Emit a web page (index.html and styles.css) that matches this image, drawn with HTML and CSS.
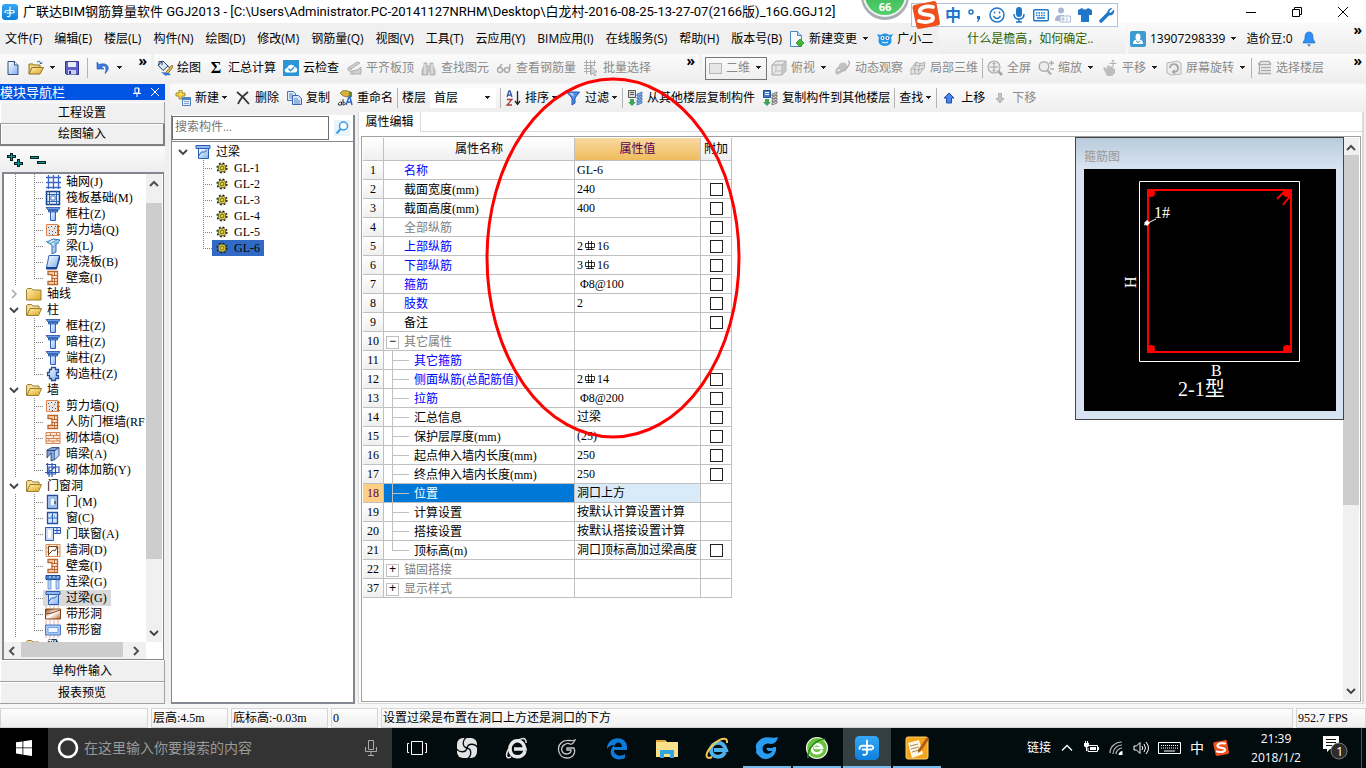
FILE: index.html
```html
<!DOCTYPE html>
<html lang="zh-CN">
<head>
<meta charset="utf-8">
<title>广联达BIM钢筋算量软件 GGJ2013</title>
<link rel="stylesheet" href="styles.css">
</head>
<body>
<svg class="sprite" aria-hidden="true">
  <defs>
    <linearGradient id="gBlue" x1="0" y1="0" x2="1" y2="1"><stop offset="0" stop-color="#fff"/><stop offset="1" stop-color="#7fb0f0"/></linearGradient>
    <linearGradient id="gGold" x1="0" y1="0" x2="1" y2="1"><stop offset="0" stop-color="#fff3b8"/><stop offset="1" stop-color="#e0a21c"/></linearGradient>
    <linearGradient id="gGreen" x1="0" y1="0" x2="0" y2="1"><stop offset="0" stop-color="#2fae4c"/><stop offset="1" stop-color="#53cf6c"/></linearGradient>
    <linearGradient id="gApp" x1="0" y1="0" x2="0" y2="1"><stop offset="0" stop-color="#35a8f5"/><stop offset="1" stop-color="#0d7fdd"/></linearGradient>
    <linearGradient id="gBrown" x1="0" y1="0" x2="1" y2="1"><stop offset="0" stop-color="#8a4310"/><stop offset=".5" stop-color="#fff"/><stop offset="1" stop-color="#b4652c"/></linearGradient>
  </defs>
  <symbol id="app" viewBox="0 0 16 16"><rect width="16" height="16" rx="3" fill="url(#gApp)"/><path d="M8 3v8q0 2-2.500 1.500M3 8.500q0-2 2-2h6q2.500 1 0 2.500H5" fill="none" stroke="#fff" stroke-width="1.200" stroke-linecap="round"/></symbol>
  <symbol id="new" viewBox="0 0 16 16"><path d="M3 1.500h6.500l3.500 3.500v9.500H3z" fill="url(#gBlue)" stroke="#35527c"/><path d="M9.500 1.500V5H13" fill="#fff" stroke="#35527c"/></symbol>
  <symbol id="open" viewBox="0 0 16 16"><path d="M1 14V4h4l1 1h6v3" fill="#f3d276" stroke="#8f7327"/><path d="M1 14l3-6.500h11.500L12 14z" fill="url(#gGold)" stroke="#8f7327"/><path d="M9 2c2-1.500 4-.5 4 1.500M11.500 2.500l1.500 1.500 1.500-1.500" fill="none" stroke="#3b5f97"/></symbol>
  <symbol id="save" viewBox="0 0 16 16"><path d="M1.500 1.500h13v13h-12l-1-1z" fill="#5f62c8" stroke="#30348c"/><path d="M4 2h8v5H4z" fill="#e9ecfa"/><path d="M4 10h8v4.500H4z" fill="#c9cdf0"/><path d="M5 11h2v3H5z" fill="#30348c"/></symbol>
  <symbol id="undo" viewBox="0 0 16 16"><path d="M2 2v7h7L6.500 7c3-2.500 6 0 3.500 6.500C16 9 13.500 1.500 4 4.500z" fill="#3d7be0" stroke="#2254ac" stroke-width=".6"/></symbol>
  <symbol id="draw" viewBox="0 0 16 16"><path d="M1 5l5-4 5 5-5 4.500z" fill="#dbe6f5" stroke="#29456e"/><path d="M2 5V1.500h3V5" fill="none" stroke="#29456e"/><path d="M11 6c2 1 2 3 1 4" stroke="#29456e" fill="none"/><path d="M15 5l-6 7-1 3 3-1.500L16 7z" fill="#e9b93b" stroke="#75540d" stroke-width=".7"/><path d="M4 12l4 3.500 6-.5-2-2z" fill="#3474d0"/></symbol>
  <symbol id="cloud" viewBox="0 0 16 16"><rect width="16" height="16" fill="#2b95d6"/><path d="M4 12.500c-3.500-.5-2.500-4.500.3-4.500C5 4 10.500 3.500 11.500 7c4 .5 3.500 5.500 0 5.500z" fill="#fff"/><path d="M5.500 8.800l2 2 3.500-3.500" fill="none" stroke="#2b95d6" stroke-width="1.500"/></symbol>
  <symbol id="slab" viewBox="0 0 16 16"><path d="M2 8l9-6 3 1-9 6zM5 9v6M2 8v2l3 2M6 14h9V7l-4 3-5 1z" fill="#cfcfcf" stroke="#b0b0b0"/></symbol>
  <symbol id="find" viewBox="0 0 16 16"><path d="M3 3h3v3h3V3h3v3l2 4v5H9v-4H7v4H1v-5l2-4z" fill="#c4c4c4" stroke="#a6a6a6" stroke-width=".7"/><path d="M4 4v10M11 4v10" stroke="#eee"/></symbol>
  <symbol id="glasses" viewBox="0 0 16 16"><g fill="none" stroke="#ababab" stroke-width="1.400"><circle cx="4" cy="10" r="2.500"/><circle cx="11" cy="10" r="2.500"/><path d="M2 9l4-5M13.500 10l.5-6M6.500 10h2"/></g></symbol>
  <symbol id="batch" viewBox="0 0 16 16"><path d="M1 2.500h12M1 5.500h10M1 8.500h7M1 11.500h7M3.500 0v14M7.500 0v14M11.500 0v6" stroke="#ababab"/><path d="M8 6l6 6H11l2 3.500-1.500.5L10 13l-2 2z" fill="#d6d6d6" stroke="#a0a0a0" stroke-width=".7"/></symbol>
  <symbol id="cube" viewBox="0 0 16 16"><path d="M1 5l4-4h10v10l-4 4H1z" fill="#e8e8e8" stroke="#a8a8a8"/><path d="M1 5h10v10M11 5l4-4" fill="none" stroke="#a8a8a8"/><path d="M11 5l4-4v10l-4 4z" fill="#c6c6c6"/><path d="M5 5v6l-4 4M5 11h6" fill="none" stroke="#bbb"/></symbol>
  <symbol id="orbit" viewBox="0 0 16 16"><circle cx="8" cy="7" r="4.500" fill="#c2c2c2"/><path d="M13 1c3 1 1 6-4 9s-8 4-8 2 2-4 4-5" fill="none" stroke="#b3b3b3" stroke-width="1.500"/><path d="M1 15l2-5 3 3z" fill="#bbb"/></symbol>
  <symbol id="local3d" viewBox="0 0 16 16"><path d="M1 9l5-7 4 1.500 5-1-1 6-5 6-4-1-4 1z" fill="#e6e6e6" stroke="#b0b0b0"/><path d="M6 3l-1.500 6L5 14M10 4L8.500 9l.5 5M1.500 9l3 0 4 1 5-2M4 5l4 1 6-1" fill="none" stroke="#b0b0b0"/></symbol>
  <symbol id="full" viewBox="0 0 16 16"><circle cx="7" cy="7" r="6" fill="#eee" stroke="#ababab" stroke-width="1.200"/><path d="M11.500 11.500L15 15" stroke="#a5a5a5" stroke-width="2.500"/><path d="M7 2.500v9M2.500 7h9M5.500 4L7 2.500 8.500 4M5.500 10L7 11.500 8.500 10" fill="none" stroke="#a0a0a0"/></symbol>
  <symbol id="zoom" viewBox="0 0 16 16"><circle cx="6" cy="6.500" r="4.800" fill="#eee" stroke="#b0b0b0" stroke-width="1.500"/><path d="M9.500 10.500L13 14.500" stroke="#b0b0b0" stroke-width="2.500"/><path d="M11 3h5M13.500 .5v5M12 9h4" stroke="#b0b0b0" stroke-width="1.300"/></symbol>
  <symbol id="pan" viewBox="0 0 16 16"><path d="M1 8l2-1 2 2V6l2-1 1 2 2-1 1 2 2 1v4l-3 3H5z" fill="#bdbdbd"/><path d="M11 0v7M7.500 3.500h7M9.500 1.500L11 0l1.500 1.500" fill="none" stroke="#b0b0b0"/></symbol>
  <symbol id="rotate" viewBox="0 0 16 16"><path d="M1 3l10-2 4 2v11L5 15l-4-2z" fill="#ededed" stroke="#b5b5b5"/><path d="M4 8a4 4 0 1 1 5 4" fill="none" stroke="#a5a5a5" stroke-width="1.800"/><path d="M9 9v5.500l-3.500-2.500z" fill="#a5a5a5"/></symbol>
  <symbol id="floors" viewBox="0 0 16 16"><path d="M2 4.500l3-3h8l2 3M2 4.500h13M5 7.500h10M5 10.500h10M2 13.500h13M3.500 5v9" fill="none" stroke="#ababab" stroke-width="1.400"/></symbol>
  <symbol id="create" viewBox="0 0 16 16"><path d="M4 0h3v3h3v3H7v3H4V6H1V3h3z" fill="#f6d94c" stroke="#8d7410" stroke-width=".8"/><path d="M7.500 7.500h8v8h-8z" fill="#eaf2fd" stroke="#5080bd"/><path d="M8 8h7v2H8z" fill="#4a83cf"/><path d="M9 11.500h5M9 13.500h5" stroke="#7fa6da"/></symbol>
  <symbol id="del" viewBox="0 0 16 16"><path d="M2 2c4 3 8 7 12 12M13 2C9 5 5 9 3 14" fill="none" stroke="#383838" stroke-width="1.800"/></symbol>
  <symbol id="copy" viewBox="0 0 16 16"><path d="M1.500 1.500h6l2 2v7h-8z" fill="#e2edfb" stroke="#4b78b7"/><path d="M6.500 5.500h6l3 3v6h-9z" fill="#d1e3fa" stroke="#3768ae"/><path d="M8 9h4M8 11h6M8 13h6M3 4h4M3 6h3M3 8h3" stroke="#5c8acb"/></symbol>
  <symbol id="rename" viewBox="0 0 16 16"><path d="M3 3l4-3 7 2-3 5-5-1z" fill="#d8b13c" stroke="#75621f" stroke-width=".7"/><path d="M12 2h3v5h-3z" fill="#5b8a3a"/><path d="M1.500 15c-1-3 3-3 3-3v3zM6 9v6c3 0 3-3 0-3" fill="none" stroke="#333"/><path d="M9 15l3-8h1l2 8M10.500 12h4" fill="none" stroke="#2f68c8" stroke-width="1.500"/></symbol>
  <symbol id="sort" viewBox="0 0 16 16"><path d="M2 7l2-6h1l2 6M3 5h3" fill="none" stroke="#35579f" stroke-width="1.300"/><path d="M2 9.500h5L2 15h5" fill="none" stroke="#a63e3e" stroke-width="1.300"/><path d="M12.500 1v13M10 11l2.500 3.500L15 11" fill="none" stroke="#222" stroke-width="1.300"/></symbol>
  <symbol id="filter" viewBox="0 0 16 16"><path d="M1.500 2h13L10 8v5l-3 2V8z" fill="#4f8ae8" stroke="#2558b4"/><path d="M4 3h4l1 4z" fill="#b7d1fb"/></symbol>
  <symbol id="fromfloor" viewBox="0 0 16 16"><path d="M1.500 .5h7v7h-7z" fill="#ddd" stroke="#555"/><path d="M3 2.500h4M3 4.500h4" stroke="#555"/><path d="M3 9h4v3h2l-4 4-4-4h2z" fill="#3ba55b"/><path d="M10 4l5-2v2l-5 2zM10 7l5-2v2l-5 2zM10 10l5-2v2l-5 2zM10 13l5-2v2l-5 2z" fill="#8fb8ee" stroke="#2660ad" stroke-width=".7"/></symbol>
  <symbol id="tofloor" viewBox="0 0 16 16"><path d="M1.500 .5h7v7h-7z" fill="#3f76cf" stroke="#27509b"/><path d="M3 2.500h4M3 4.500h4" stroke="#fff"/><path d="M3 9h4v3h2l-4 4-4-4h2z" fill="#3ba55b"/><path d="M10 4l5-2v2l-5 2zM10 7l5-2v2l-5 2zM10 10l5-2v2l-5 2zM10 13l5-2v2l-5 2z" fill="#ddd" stroke="#555" stroke-width=".7"/></symbol>
  <symbol id="up" viewBox="0 0 16 16"><path d="M8 3l5 5h-2.500v5h-5V8H3z" fill="#4a84ea" stroke="#1d4fae"/></symbol>
  <symbol id="down" viewBox="0 0 16 16"><path d="M8 13L4 8.500h2.500v-5h3v5H12z" fill="#c6c6c6" stroke="#b0b0b0"/></symbol>
  <symbol id="change" viewBox="0 0 16 16"><path d="M1.500 .5h7l4 4v11h-11z" fill="#f4faff" stroke="#4b86bd"/><path d="M8.500 .5v4h4" fill="#b8d9f4" stroke="#4b86bd"/><path d="M11 8l4 4-4 4-4-4z" fill="#41b53c" stroke="#1d7f1b" stroke-width=".7"/></symbol>
  <symbol id="owl" viewBox="0 0 16 16"><path d="M0 3l4 1c2-2 6-2 8 0l4-1-2 4c2 5-2 8-6 8s-8-3-6-8z" fill="#2496e8"/><circle cx="5.500" cy="7" r="2" fill="#fff"/><circle cx="10.500" cy="7" r="2" fill="#fff"/><circle cx="5.500" cy="7" r=".8"/><circle cx="10.500" cy="7" r=".8"/><path d="M5 11q3 2 6 0" stroke="#fff" fill="none"/></symbol>
  <symbol id="user" viewBox="0 0 16 16"><rect width="16" height="16" rx="2" fill="#3c9bd0"/><path d="M8 2.500c3 0 3 5 1.500 6 3 .5 3.500 2 3.500 4.500H3c0-2.500.5-4 3.500-4.500C5 7.500 5 2.500 8 2.500" fill="#fff"/><path d="M6 10l2 1.500L10 10" stroke="#3c9bd0" fill="none"/></symbol>
  <symbol id="bell" viewBox="0 0 16 16"><path d="M8 1c3.500 0 4 3 4 6 0 2 2 3.500 2 5H2c0-1.500 2-3 2-5 0-3 .5-6 4-6z" fill="#2e8ff5" stroke="#1b62bb" stroke-width=".6"/><path d="M6 13.500h4L8 15.500z" fill="#2b6db8"/></symbol>
  <symbol id="search" viewBox="0 0 16 16"><rect x="0" y="0" width="16" height="16" fill="#e8f3fc"/><circle cx="9.500" cy="6" r="4" fill="#fff" stroke="#3a9be6" stroke-width="1.500"/><path d="M6.500 9L2.500 13.500" stroke="#3a9be6" stroke-width="2"/></symbol>
  <symbol id="plus2" viewBox="0 0 16 16"><path d="M4.500 1v8M0 4.500h9M11.500 7v8M7 11.500h9" stroke="#022" stroke-width="3"/><path d="M4.500 2v6M1 4.500h7M11.500 8v6M8 11.500h7" stroke="#0c9999"/></symbol>
  <symbol id="minus2" viewBox="0 0 16 16"><path d="M0 5.500h9M7 10.500h9" stroke="#022" stroke-width="3"/><path d="M1 5.500h7M8 10.500h7" stroke="#0c9999"/></symbol>
  <symbol id="chevD" viewBox="0 0 10 10"><path d="M1 3l4 4 4-4" fill="none" stroke="#404040" stroke-width="1.800"/></symbol>
  <symbol id="chevU" viewBox="0 0 10 10"><path d="M1 7l4-4 4 4" fill="none" stroke="#505050" stroke-width="2"/></symbol>
  <symbol id="chevL" viewBox="0 0 10 10"><path d="M7 1L3 5l4 4" fill="none" stroke="#505050" stroke-width="2"/></symbol>
  <symbol id="chevR" viewBox="0 0 10 10"><path d="M3 1l4 4-4 4" fill="none" stroke="#505050" stroke-width="2"/></symbol>
  <symbol id="chevG" viewBox="0 0 10 10"><path d="M3 1l4 4-4 4" fill="none" stroke="#a6a6a6" stroke-width="1.500"/></symbol>
  <symbol id="folder" viewBox="0 0 16 16"><path d="M.5 3.500l1-1h4l1.500 1.500h8v10H.5z" fill="url(#gGold)" stroke="#9c7e31"/></symbol>
  <symbol id="folderO" viewBox="0 0 16 16"><path d="M.5 13.500v-10l1-1h4l1.500 1.500h6v3" fill="#f4dd94" stroke="#9c7e31"/><path d="M1 13.500L4 6.500h11.500l-3 7z" fill="url(#gGold)" stroke="#9c7e31"/></symbol>
  <symbol id="grid" viewBox="0 0 16 16"><path d="M3.500 1v14M8.500 1v14M13.500 1v14M1 3.500h15M1 8.500h15M1 13.500h15" stroke="#3b68c4" stroke-width="1.300"/></symbol>
  <symbol id="raft" viewBox="0 0 16 16"><path d="M1.500 1.500h13v13h-13z" fill="#e4effc" stroke="#173e85" stroke-width="1.500"/><path d="M4.500 1v14M11.500 1v14M1 4.500h14M1 11.500h14M7 4v8M9 4v8M4 7h8M4 9h8" stroke="#2d63b7"/><path d="M6.500 6.500h3v3h-3z" fill="#fff"/></symbol>
  <symbol id="column" viewBox="0 0 16 16"><path d="M5.500 5.500h5v9h-5z" fill="url(#gBlue)" stroke="#2b5fc0"/><path d="M1 1.500h14l-1.500 2.500H3zM3.500 4h9v2h-9z" fill="#6b9ceb" stroke="#224f9f" stroke-width=".8"/></symbol>
  <symbol id="swall" viewBox="0 0 16 16"><path d="M1.500 2.500h11v11h-11z" fill="#e8e6e4" stroke="#d98353"/><path d="M3 5.500h1M6 4.500h1M9 6.500h1M4 8.500h1M7 9.500h1M10 10.500h1M4 11.500h1M7 12.500h1M10 4.500h1" stroke="#555"/><path d="M12 4.500h3M12 8.500h3M12 12.500h3M13.500 3v11" stroke="#c85a1b"/></symbol>
  <symbol id="beam" viewBox="0 0 16 16"><path d="M2 4l6-3 7 1-4 4v8l-4 2V7z" fill="url(#gBlue)" stroke="#2f6fae"/><path d="M1 3l5 3M4 6l8-4M9 5h5M8 10l6-7" stroke="#4a9bd0"/></symbol>
  <symbol id="castslab" viewBox="0 0 16 16"><path d="M4 1.500h10.500l-3 12H1.500z" fill="url(#gBlue)" stroke="#2b5fc0"/><path d="M1.500 13.500h10v1.500h-10zM14.500 2v3l-3 10" fill="#1e448e" stroke="#1e448e"/></symbol>
  <symbol id="niche" viewBox="0 0 16 16"><path d="M3 1.500h9.500v13H3v-3h4v-7H3z" fill="#ffe8d6" stroke="#bd6429" stroke-width="1.300"/><path d="M7 5.500h5M7 8.500h5M7 11.500h5M9.500 2v3M9.500 9v5" stroke="#bd6429"/></symbol>
  <symbol id="cross" viewBox="0 0 16 16"><path d="M4.500 3.500h2v-2h4v2h3v3h-2v3h2v3h-3v2h-4v-2h-2v-3h-2v-3h2z" fill="url(#gBlue)" stroke="#244e9c" stroke-width="1.300"/></symbol>
  <symbol id="brick" viewBox="0 0 16 16"><path d="M1 2.500h14v11H1z" fill="#ffe9d8" stroke="#d18554"/><path d="M1 5.500h14M1 8.500h14M1 11h14M5.500 3v3M11.500 3v3M8.500 6v3M4 9v2M12 9v2M8 11v3" stroke="#d18554"/></symbol>
  <symbol id="dbeam" viewBox="0 0 16 16"><path d="M2 4l5-2.500h7l-4 3v9l-4 1.500V7L2 12z" fill="#80a4db" stroke="#1c3868" stroke-width=".8"/><path d="M2 4.500h8M10 4.500l4-3v8l-4 4" fill="#c3d7f3" stroke="#1c3868" stroke-width=".8"/></symbol>
  <symbol id="rebar" viewBox="0 0 16 16"><path d="M2.500 1v11h8V2.500H1M0 10.500h14V5H4V15M7 1v14M4 10l7-6" fill="none" stroke="#2757b7" stroke-width="1.200"/></symbol>
  <symbol id="door" viewBox="0 0 16 16"><path d="M2.500 1.500h10v13h-10z" fill="#bad4f8" stroke="#234f9c" stroke-width="1.300"/><path d="M5 4h5v8H5z" fill="#eff6ff" stroke="#709ddd"/><path d="M10 7v3" stroke="#222"/></symbol>
  <symbol id="window" viewBox="0 0 16 16"><path d="M2.500 2.500h10v11h-10z" fill="#d4e6fd" stroke="#234f9c" stroke-width="1.300"/><path d="M7.500 2v12M2 8h11M6 6h1M9 6h1" stroke="#2e68c0"/></symbol>
  <symbol id="dwin" viewBox="0 0 16 16"><path d="M.5 1.500h8v13h-8z" fill="#c7dcfa" stroke="#2c5cb0"/><path d="M3 4h3v8H3z" fill="#fff"/><path d="M8.500 1.500h7v6h-7zM12 1v7M9 4.500h7" fill="#d9e8fc" stroke="#2c5cb0"/></symbol>
  <symbol id="whole" viewBox="0 0 16 16"><path d="M1 2.500h14v12H1zM1 6h14M1 10h14M4 2v12M12 2v12" fill="#fff0e3" stroke="#d98b58"/><path d="M3.500 13.500v-9h9v9" fill="#fff" stroke="#70401c"/><path d="M4 12l4-4 2 1 2-4" stroke="#70401c" fill="none"/></symbol>
  <symbol id="lbeam" viewBox="0 0 16 16"><path d="M1 1.500h14v4H1z" fill="#467ecb" stroke="#1b4991"/><path d="M4 3h2M8 3h2M12 3h2" stroke="#dce9fb"/><path d="M3 6h3v9H3zM11 6h3v9h-3z" fill="#bcd6f8" stroke="#477fc8" stroke-width=".7"/></symbol>
  <symbol id="lintel" viewBox="0 0 16 16"><path d="M3.500 4.500h10v10h-10z" fill="url(#gBlue)" stroke="#2c5cb0"/><path d="M1 1.500h14v3H1z" fill="#8fb8f2" stroke="#2c5cb0"/><path d="M3.500 12l3-4h3l2.500-2" fill="none" stroke="#2c5cb0"/></symbol>
  <symbol id="striphole" viewBox="0 0 16 16"><path d="M1 0v2M5 0v2M9 0v2M13 0v2M1 14v2M5 14v2M9 14v2M13 14v2" stroke="#eeaaa0"/><path d="M.5 3h15v10H.5z" fill="url(#gBrown)" stroke="#86430f"/><path d="M1 8l6-1 8-3" stroke="#86430f" fill="none"/></symbol>
  <symbol id="stripwin" viewBox="0 0 16 16"><path d="M1 0v3M5 0v3M9 0v3M13 0v3M1 13v3M5 13v3M9 13v3M13 13v3" stroke="#eeaaa0"/><path d="M.5 3h15v10H.5z" fill="#a9c9f7" stroke="#4875c6"/><path d="M3 5.500h10v5H3z" fill="#eff6ff" stroke="#7aa4e2"/></symbol>
  <symbol id="gear" viewBox="0 0 12 12"><circle cx="6" cy="6" r="4.800" fill="none" stroke="#222" stroke-width="1.600" stroke-dasharray="1.900 1.870"/><circle cx="6" cy="6" r="3.900" fill="#f2e63b" stroke="#333" stroke-width=".7"/><path d="M6 2.500v7M2.500 6h7M4 4l4 4M8 4L4 8" stroke="#4b4600" stroke-width=".6"/><circle cx="6" cy="6" r="1.500" fill="#fff04a" stroke="#333" stroke-width=".5"/></symbol>
  <symbol id="sogou" viewBox="0 0 28 28"><path d="M2 4L22 0q2 0 2.500 2L28 22q0 2-2 2.500L7 28q-2 0-2.500-2L.5 7Q.5 4.500 2 4z" fill="#f0501e"/><path d="M21 6C14 4 7 7 8 11c1 4 13 1 13 6 0 4-8 5-14 3" fill="none" stroke="#fff" stroke-width="3.800" stroke-linecap="round"/></symbol>
  <symbol id="hrb" viewBox="0 0 12 12"><path d="M4.500 1v9M7.500 1v9M1.500 3.500h9v4h-9zM2 9.500h8" fill="none" stroke="#000" stroke-width=".8"/></symbol>
</svg>

<div class="app">
  <header class="titlebar">
    <svg class="i16"><use href="#app"/></svg>
    <h1>广联达BIM钢筋算量软件 GGJ2013 - [C:\Users\Administrator.PC-20141127NRHM\Desktop\白龙村-2016-08-25-13-27-07(2166版)_16G.GGJ12]</h1>
    <div class="winbtns">
      <button aria-label="最小化"><svg viewBox="0 0 12 12"><path d="M1 6.500h10" stroke="#000"/></svg></button>
      <button aria-label="还原"><svg viewBox="0 0 12 12"><path d="M1.500 3.500h7v7h-7zM3.500 3V1.500h7v7H9" fill="none" stroke="#000"/></svg></button>
      <button aria-label="关闭"><svg viewBox="0 0 12 12"><path d="M1 1l10 10M11 1L1 11" stroke="#000"/></svg></button>
    </div>
  </header>

  <nav class="menubar">
    <div class="menus">
      <button>文件(F)</button><button>编辑(E)</button><button>楼层(L)</button><button>构件(N)</button><button>绘图(D)</button><button>修改(M)</button><button>钢筋量(Q)</button><button>视图(V)</button><button>工具(T)</button><button>云应用(Y)</button><button>BIM应用(I)</button><button>在线服务(S)</button><button>帮助(H)</button><button>版本号(B)</button>
      <button class="tool"><svg class="i16"><use href="#change"/></svg>新建变更<i class="arrow"></i></button>
      <button class="tool"><svg class="i16"><use href="#owl"/></svg>广小二</button>
    </div>
    <a class="tip" href="#">什么是檐高，如何确定..</a>
    <div class="account">
      <button class="tool"><svg class="i16"><use href="#user"/></svg>13907298339<i class="arrow"></i></button>
      <span>造价豆:0</span>
      <button aria-label="通知"><svg class="i16"><use href="#bell"/></svg></button>
      <button class="more" aria-label="更多">»</button>
    </div>
  </nav>

  <div class="toolbars">
    <div class="toolbar files">
      <button aria-label="新建"><svg class="i16"><use href="#new"/></svg></button>
      <button class="tool" aria-label="打开"><svg class="i16"><use href="#open"/></svg><i class="arrow"></i></button>
      <button aria-label="保存"><svg class="i16"><use href="#save"/></svg></button>
      <i class="sep"></i>
      <button class="tool" aria-label="撤销"><svg class="i16"><use href="#undo"/></svg><i class="arrow"></i></button>
      <button class="more" aria-label="更多">»</button>
    </div>
    <div class="toolbar drawing">
      <button class="tool"><svg class="i16"><use href="#draw"/></svg>绘图</button>
      <button class="tool"><b class="i16 sigma">Σ</b>汇总计算</button>
      <button class="tool"><svg class="i16"><use href="#cloud"/></svg>云检查</button>
      <button class="tool off"><svg class="i16"><use href="#slab"/></svg>平齐板顶</button>
      <button class="tool off"><svg class="i16"><use href="#find"/></svg>查找图元</button>
      <button class="tool off"><svg class="i16"><use href="#glasses"/></svg>查看钢筋量</button>
      <button class="tool off"><svg class="i16"><use href="#batch"/></svg>批量选择</button>
      <button class="more" aria-label="更多">»</button>
    </div>
    <div class="toolbar views">
      <button class="tool off dim"><i class="swatch"></i>二维<i class="arrow"></i></button>
      <button class="tool off"><svg class="i16"><use href="#cube"/></svg>俯视<i class="arrow"></i></button>
      <button class="tool off"><svg class="i16"><use href="#orbit"/></svg>动态观察</button>
      <button class="tool off"><svg class="i16"><use href="#local3d"/></svg>局部三维</button>
      <i class="sep"></i>
      <button class="tool off"><svg class="i16"><use href="#full"/></svg>全屏</button>
      <button class="tool off"><svg class="i16"><use href="#zoom"/></svg>缩放<i class="arrow"></i></button>
      <button class="tool off"><svg class="i16"><use href="#pan"/></svg>平移<i class="arrow"></i></button>
      <button class="tool off"><svg class="i16"><use href="#rotate"/></svg>屏幕旋转<i class="arrow"></i></button>
      <i class="sep"></i>
      <button class="tool off"><svg class="i16"><use href="#floors"/></svg>选择楼层</button>
      <button class="more" aria-label="更多">»</button>
    </div>
  </div>

  <div class="body">
    <aside class="nav">
      <div class="navhead"><h2>模块导航栏</h2>
        <button aria-label="固定"><svg viewBox="0 0 10 10"><path d="M3 1h4v5H3zM1 6.500h8M5 7v3M6.500 1v5" fill="none" stroke="#fff"/></svg></button>
        <button aria-label="关闭"><svg viewBox="0 0 10 10"><path d="M1 1l8 8M9 1L1 9" stroke="#fff"/></svg></button>
      </div>
      <button class="bigbtn">工程设置</button>
      <button class="bigbtn raised">绘图输入</button>
      <div class="navtools"><button aria-label="全部展开"><svg class="i16"><use href="#plus2"/></svg></button><button aria-label="全部折叠"><svg class="i16"><use href="#minus2"/></svg></button></div>
      <div class="treebox">
        <div class="treeview">
          <ul class="tree">
            <li><ul class="leaves">
              <li><button><svg class="i16"><use href="#grid"/></svg>轴网(J)</button></li>
              <li><button><svg class="i16"><use href="#raft"/></svg>筏板基础(M)</button></li>
              <li><button><svg class="i16"><use href="#column"/></svg>框柱(Z)</button></li>
              <li><button><svg class="i16"><use href="#swall"/></svg>剪力墙(Q)</button></li>
              <li><button><svg class="i16"><use href="#beam"/></svg>梁(L)</button></li>
              <li><button><svg class="i16"><use href="#castslab"/></svg>现浇板(B)</button></li>
              <li><button><svg class="i16"><use href="#niche"/></svg>壁龛(I)</button></li>
            </ul></li>
            <li><button class="group"><svg class="chev"><use href="#chevG"/></svg><svg class="i16"><use href="#folder"/></svg>轴线</button></li>
            <li><button class="group"><svg class="chev"><use href="#chevD"/></svg><svg class="i16"><use href="#folderO"/></svg>柱</button>
            <ul class="leaves">
              <li><button><svg class="i16"><use href="#column"/></svg>框柱(Z)</button></li>
              <li><button><svg class="i16"><use href="#column"/></svg>暗柱(Z)</button></li>
              <li><button><svg class="i16"><use href="#column"/></svg>端柱(Z)</button></li>
              <li><button><svg class="i16"><use href="#cross"/></svg>构造柱(Z)</button></li>
            </ul></li>
            <li><button class="group"><svg class="chev"><use href="#chevD"/></svg><svg class="i16"><use href="#folderO"/></svg>墙</button>
            <ul class="leaves">
              <li><button><svg class="i16"><use href="#swall"/></svg>剪力墙(Q)</button></li>
              <li><button><svg class="i16"><use href="#niche"/></svg>人防门框墙(RF</button></li>
              <li><button><svg class="i16"><use href="#brick"/></svg>砌体墙(Q)</button></li>
              <li><button><svg class="i16"><use href="#dbeam"/></svg>暗梁(A)</button></li>
              <li><button><svg class="i16"><use href="#rebar"/></svg>砌体加筋(Y)</button></li>
            </ul></li>
            <li><button class="group"><svg class="chev"><use href="#chevD"/></svg><svg class="i16"><use href="#folderO"/></svg>门窗洞</button>
            <ul class="leaves">
              <li><button><svg class="i16"><use href="#door"/></svg>门(M)</button></li>
              <li><button><svg class="i16"><use href="#window"/></svg>窗(C)</button></li>
              <li><button><svg class="i16"><use href="#dwin"/></svg>门联窗(A)</button></li>
              <li><button><svg class="i16"><use href="#whole"/></svg>墙洞(D)</button></li>
              <li><button><svg class="i16"><use href="#niche"/></svg>壁龛(I)</button></li>
              <li><button><svg class="i16"><use href="#lbeam"/></svg>连梁(G)</button></li>
              <li><button class="current"><svg class="i16"><use href="#lintel"/></svg>过梁(G)</button></li>
              <li><button><svg class="i16"><use href="#striphole"/></svg>带形洞</button></li>
              <li><button><svg class="i16"><use href="#stripwin"/></svg>带形窗</button></li>
            </ul></li>
            <li><button class="group"><svg class="chev"><use href="#chevD"/></svg><svg class="i16"><use href="#folderO"/></svg>梁</button></li>
          </ul>
        </div>
        <div class="vscroll"><svg><use href="#chevU"/></svg><div class="track navtrack"><i></i></div><svg><use href="#chevD"/></svg></div>
        <div class="hscroll"><svg><use href="#chevL"/></svg><div class="track"><i></i></div><svg><use href="#chevR"/></svg></div>
      </div>
      <button class="bigbtn">单构件输入</button>
      <button class="bigbtn">报表预览</button>
    </aside>

    <div class="work">
      <div class="toolbar edit">
        <button class="tool"><svg class="i16"><use href="#create"/></svg>新建<i class="arrow"></i></button>
        <button class="tool"><svg class="i16"><use href="#del"/></svg>删除</button>
        <button class="tool"><svg class="i16"><use href="#copy"/></svg>复制</button>
        <button class="tool"><svg class="i16"><use href="#rename"/></svg>重命名</button>
        <i class="sep"></i>
        <label for="floor">楼层</label>
        <span class="pick"><select id="floor"><option>首层</option></select><i class="arrow"></i></span>
        <i class="sep"></i>
        <button class="tool"><svg class="i16"><use href="#sort"/></svg>排序<i class="arrow"></i></button>
        <button class="tool"><svg class="i16"><use href="#filter"/></svg>过滤<i class="arrow"></i></button>
        <i class="sep"></i>
        <button class="tool"><svg class="i16"><use href="#fromfloor"/></svg>从其他楼层复制构件</button>
        <button class="tool"><svg class="i16"><use href="#tofloor"/></svg>复制构件到其他楼层</button>
        <i class="sep"></i>
        <button class="tool">查找<i class="arrow"></i></button>
        <i class="sep"></i>
        <button class="tool"><svg class="i16"><use href="#up"/></svg>上移</button>
        <button class="tool off"><svg class="i16"><use href="#down"/></svg>下移</button>
      </div>
      <div class="panes">
        <section class="parts">
          <div class="searchrow"><input type="text" placeholder="搜索构件..." aria-label="搜索构件"><button aria-label="搜索"><svg class="i16"><use href="#search"/></svg></button></div>
          <div class="partbox">
            <button class="group"><svg class="chev"><use href="#chevD"/></svg><svg class="i16"><use href="#lintel"/></svg>过梁</button>
            <ul class="leaves">
              <li><button><svg class="i12"><use href="#gear"/></svg>GL-1</button></li>
              <li><button><svg class="i12"><use href="#gear"/></svg>GL-2</button></li>
              <li><button><svg class="i12"><use href="#gear"/></svg>GL-3</button></li>
              <li><button><svg class="i12"><use href="#gear"/></svg>GL-4</button></li>
              <li><button><svg class="i12"><use href="#gear"/></svg>GL-5</button></li>
              <li><button class="selected"><svg class="i12"><use href="#gear"/></svg>GL-6</button></li>
            </ul>
          </div>
        </section>

        <main class="editor">
          <div class="tabs"><button class="tab">属性编辑</button></div>
          <div class="sheet">
            <div class="canvas">
              <table>
                <colgroup><col class="c1"><col class="c2"><col class="c3"><col class="c4"></colgroup>
                <thead><tr><th></th><th>属性名称</th><th class="hot">属性值</th><th>附加</th></tr></thead>
                <tbody>
                <tr><th>1</th><td class="n key">名称</td><td>GL-6</td><td></td></tr>
                <tr><th>2</th><td class="n">截面宽度(mm)</td><td>240</td><td><input type="checkbox" aria-label="附加 截面宽度"></td></tr>
                <tr><th>3</th><td class="n">截面高度(mm)</td><td>400</td><td><input type="checkbox" aria-label="附加 截面高度"></td></tr>
                <tr><th>4</th><td class="n dimmed">全部纵筋</td><td></td><td><input type="checkbox" aria-label="附加 全部纵筋"></td></tr>
                <tr><th>5</th><td class="n key">上部纵筋</td><td>2<svg class="phi"><use href="#hrb"/></svg>16</td><td><input type="checkbox" aria-label="附加 上部纵筋"></td></tr>
                <tr><th>6</th><td class="n key">下部纵筋</td><td>3<svg class="phi"><use href="#hrb"/></svg>16</td><td><input type="checkbox" aria-label="附加 下部纵筋"></td></tr>
                <tr><th>7</th><td class="n key">箍筋</td><td class="round">Φ8@100</td><td><input type="checkbox" aria-label="附加 箍筋"></td></tr>
                <tr><th>8</th><td class="n key">肢数</td><td>2</td><td><input type="checkbox" aria-label="附加 肢数"></td></tr>
                <tr><th>9</th><td class="n">备注</td><td></td><td><input type="checkbox" aria-label="附加 备注"></td></tr>
                <tr><th>10</th><td class="n fold dimmed"><button aria-label="折叠">−</button>其它属性</td><td></td><td></td></tr>
                <tr><th>11</th><td class="n sub key">其它箍筋</td><td></td><td></td></tr>
                <tr><th>12</th><td class="n sub key">侧面纵筋(总配筋值)</td><td>2<svg class="phi"><use href="#hrb"/></svg>14</td><td><input type="checkbox" aria-label="附加 侧面纵筋"></td></tr>
                <tr><th>13</th><td class="n sub key">拉筋</td><td class="round">Φ8@200</td><td><input type="checkbox" aria-label="附加 拉筋"></td></tr>
                <tr><th>14</th><td class="n sub">汇总信息</td><td>过梁</td><td><input type="checkbox" aria-label="附加 汇总信息"></td></tr>
                <tr><th>15</th><td class="n sub">保护层厚度(mm)</td><td>(25)</td><td><input type="checkbox" aria-label="附加 保护层厚度"></td></tr>
                <tr><th>16</th><td class="n sub">起点伸入墙内长度(mm)</td><td>250</td><td><input type="checkbox" aria-label="附加 起点伸入墙内长度"></td></tr>
                <tr><th>17</th><td class="n sub">终点伸入墙内长度(mm)</td><td>250</td><td><input type="checkbox" aria-label="附加 终点伸入墙内长度"></td></tr>
                <tr class="active"><th>18</th><td class="n sub">位置</td><td>洞口上方</td><td></td></tr>
                <tr><th>19</th><td class="n sub">计算设置</td><td>按默认计算设置计算</td><td></td></tr>
                <tr><th>20</th><td class="n sub">搭接设置</td><td>按默认搭接设置计算</td><td></td></tr>
                <tr><th>21</th><td class="n sub last">顶标高(m)</td><td>洞口顶标高加过梁高度</td><td><input type="checkbox" aria-label="附加 顶标高"></td></tr>
                <tr><th>22</th><td class="n fold dimmed"><button aria-label="展开">+</button>锚固搭接</td><td></td><td></td></tr>
                <tr><th>37</th><td class="n fold dimmed"><button aria-label="展开">+</button>显示样式</td><td></td><td></td></tr>
                </tbody>
              </table>
            </div>
            <figure class="stirrup">
              <figcaption>箍筋图</figcaption>
              <svg viewBox="0 0 252 242" role="img" aria-label="2-1型箍筋">
                <rect width="252" height="242" fill="#000"/>
                <path d="M55.500 12.500h160v180h-160z" fill="none" stroke="#fff"/>
                <path d="M64 21h143v162H64z" fill="none" stroke="#f00" stroke-width="2"/>
                <g fill="#f00"><circle cx="67" cy="24" r="4"/><circle cx="203" cy="24" r="4"/><circle cx="67" cy="180" r="4"/><circle cx="203" cy="180" r="4"/></g>
                <path d="M200 23l-7 7M206 27l-7 9" stroke="#f00" stroke-width="2"/>
                <path d="M60 56l4-2 4-2 4-2" stroke="#fff" fill="none"/><path d="M63 51l3 3-3 3-3-3z" fill="#fff"/>
                <g fill="#fff"><text x="70" y="49" font-size="16">1#</text><text x="127" y="207" font-size="16">B</text><text transform="translate(52 119) rotate(-90)" font-size="16">H</text><text x="94" y="227" font-size="20">2-1型</text></g>
              </svg>
            </figure>
            <div class="vscroll"><svg><use href="#chevU"/></svg><div class="track maintrack"><i></i></div><svg><use href="#chevD"/></svg></div>
          </div>
        </main>
      </div>
    </div>
  </div>

  <footer class="status"><span class="s1"></span><span class="s2">层高:4.5m</span><span class="s3">底标高:-0.03m</span><span class="s4">0</span><span class="s5">设置过梁是布置在洞口上方还是洞口的下方</span><span class="s6">952.7 FPS</span></footer>

  <div class="taskbar">
    <button class="start" aria-label="开始"><svg viewBox="0 0 16 16"><path d="M0 2.300L6.500 1.400v6.100H0zM7.300 1.300L16 0v7.500H7.300zM0 8.300h6.500v6.200L0 13.600zM7.300 8.300H16V16l-8.700-1.300z" fill="#fff"/></svg></button>
    <div class="cortana"><svg viewBox="0 0 22 22"><circle cx="11" cy="11" r="9" fill="none" stroke="#fff" stroke-width="2.600"/></svg><input type="text" placeholder="在这里输入你要搜索的内容" aria-label="搜索"><svg viewBox="0 0 14 18" class="mic"><path d="M4.500 1.500h5v9h-5zM1.500 8v4.500h11V8M7 13v3.500M4 16.500h6" fill="none" stroke="#aaa"/></svg></div>
    <div class="tasks">
      <button aria-label="任务视图"><svg viewBox="0 0 24 24"><path d="M6.500 5.500h11v13h-11zM4 7.500H2.500v9H4M20 7.500h1.500v9H20" fill="none" stroke="#fff"/></svg></button>
      <button aria-label="应用"><svg viewBox="0 0 24 24"><rect x="2" y="2" width="20" height="20" rx="6" fill="#e4e4e4"/><path d="M12 12C7 11 7 4 12 1M12 12c1-5 8-5 11 0M12 12c5 1 5 8 0 11M12 12c-1 5-8 5-11 0" fill="none" stroke="#020b0e" stroke-width="1.300"/></svg></button>
      <button aria-label="浏览器"><svg viewBox="0 0 24 24"><path d="M20 15c-2 8-15 8-15-2s13-12 15 0H9" fill="none" stroke="#e8e8e8" stroke-width="3.600"/><path d="M21 7c1-8-9-4-15 3S0 24 6 21" fill="none" stroke="#e8e8e8" stroke-width="1.500"/></svg></button>
      <button aria-label="浏览器"><svg viewBox="0 0 24 24"><path d="M20 4c-5 2-9-2-14 3s-2 15 6 15c6 0 9-5 7-10h-7v2h4c1 4-7 6-9 1s5-9 8-7c2 1 4-2 5-4z" fill="none" stroke="#c8c8c8" stroke-width="1.300"/></svg></button>
      <button aria-label="Edge"><svg viewBox="0 0 24 24"><path d="M2 13C2-1 22-1 22 11v3H9c0 6 7 7 11 4v4C9 27 1 18 9 9c-3 0-6 2-7 4zM9 11h8c0-6-7-6-8 0z" fill="#0d7bd7" fill-rule="evenodd"/></svg></button>
      <button aria-label="文件资源管理器"><svg viewBox="0 0 24 24"><path d="M1 4h9l2 2h11v15H1z" fill="#fbe08c"/><path d="M1 4h9v2H1z" fill="#e0aa3b"/><path d="M5 14h14v8h-4v-4H9v4H5z" fill="#2fa6e0"/></svg></button>
      <button aria-label="Internet Explorer"><svg viewBox="0 0 24 24"><path d="M20 16c-3 7-14 6-14-2s12-11 15 0H9" fill="none" stroke="#4db1ec" stroke-width="4"/><path d="M22 7c1-8-9-4-16 4S1 24 7 21" fill="none" stroke="#f3c64c" stroke-width="2"/></svg></button>
      <button class="open" aria-label="应用"><svg viewBox="0 0 24 24"><path d="M23 1c-5 2-10-1-15 1S0 9 1 12s-1 4 1 6 5 6 10 5 10-5 9-12h-3c1 7-8 9-10 4s3-9 8-7c4 0 6-3 7-7z" fill="#279cf2"/><path d="M11 12h8v3h-6z" fill="#279cf2"/></svg></button>
      <button class="open" aria-label="浏览器"><svg viewBox="0 0 24 24"><circle cx="12" cy="12" r="10.500" fill="#69c33f" stroke="#eaf7e1" stroke-width="1.200"/><path d="M17 14c-2 5-10 4-10-1s8-7 10-1H9" fill="none" stroke="#fff" stroke-width="2.500"/><path d="M20 3C11 3 2 13 3 22" fill="none" stroke="#278a1b" stroke-width="1.500"/></svg></button>
      <button class="open focus" aria-label="广联达"><svg viewBox="0 0 16 16"><use href="#app"/></svg></button>
      <button class="open" aria-label="记事"><svg viewBox="0 0 24 24"><rect x="1" y="1" width="22" height="22" rx="2" fill="#f3a51d" stroke="#ffd06a"/><path d="M3 7l11-3 4 14-11 4z" fill="#fff7e6"/><path d="M5 10l8-2M6 13l8-2M7 16l7-2" stroke="#a58a5a"/><path d="M22 1l-9 13v3l3-2L24 3z" fill="#b25a17"/></svg></button>
    </div>
    <div class="tray">
      <span>链接</span>
      <svg class="t12" viewBox="0 0 12 12"><path d="M1 8.500L6 3.500l5 5" fill="none" stroke="#fff" stroke-width="1.300"/></svg>
      <svg class="t16" viewBox="0 0 16 16"><path d="M6 5.500h8.500v6H5V8" fill="none" stroke="#fff"/><path d="M7 7h6v3H7zM15 7h1v3h-1zM1 3h5v3q-2.500 3-5 0zM2 1h1v2H2zM4 1h1v2H4zM3 7h1v4H3z" fill="#fff"/></svg>
      <svg class="t16" viewBox="0 0 16 16"><g fill="none" stroke="#bbb" stroke-width="1.200"><path d="M2 13C2 7 7 2 14 2M5 14c0-5 4-9 9-9M8 14c0-3 3-6 6-6"/></g><path d="M10.500 15c0-2 2-4 4-4v4z" fill="#fff"/></svg>
      <svg class="t16" viewBox="0 0 16 16"><path d="M1 6h2.500L7 2.500v11L3.500 10H1zM9 6q1.500 2 0 4M11 4q3 4 0 8M13 2q5 6 0 12" fill="none" stroke="#fff"/></svg>
      <svg class="t23" viewBox="0 0 23 14"><path d="M.5 1.500h22v11H.5z" fill="none" stroke="#fff"/><path d="M3 4.500h17M3 7h17" stroke="#fff" stroke-dasharray="1 1"/><path d="M6 10h11" stroke="#fff"/></svg>
      <span class="ime">中</span>
      <svg class="t16" viewBox="0 0 28 28"><use href="#sogou"/></svg>
    </div>
    <time>21:39<br>2018/1/2</time>
    <button class="notify" aria-label="操作中心"><svg viewBox="0 0 26 26"><path d="M1 1h16v13H8l-3 3v-3H1z" fill="#fff"/><path d="M4 4.500h10M4 7.500h10M4 10.500h6" stroke="#111"/><circle cx="17" cy="16" r="8" fill="#2c2c2c" stroke="#777"/><text x="14" y="21" font-size="13" fill="#fff">1</text></svg></button>
  </div>

  <svg class="ball" viewBox="0 0 50 50"><circle cx="25" cy="24" r="24" fill="#a9aeb2"/><circle cx="25" cy="23" r="22" fill="#f3f3f3"/><circle cx="25" cy="23" r="20" fill="url(#gGreen)"/><text x="25" y="39" text-anchor="middle" font-size="11" font-weight="bold" fill="#fff">66</text></svg>
  <div class="imebar">
    <svg class="logo" viewBox="0 0 28 28"><use href="#sogou"/></svg>
    <b>中</b>
    <svg class="i16" viewBox="0 0 16 16"><circle cx="4" cy="5" r="2" fill="none" stroke="#2076c8" stroke-width="1.500"/><path d="M10 9h3v3l-2 3h-1l1-3h-1z" fill="#2076c8"/></svg>
    <svg class="i16" viewBox="0 0 16 16"><circle cx="8" cy="8" r="7" fill="none" stroke="#2076c8" stroke-width="1.500"/><path d="M4.500 9q3.500 5 7 0M5.500 4.500v2M10.500 4.500v2" fill="none" stroke="#2076c8" stroke-width="1.400"/></svg>
    <svg class="i16" viewBox="0 0 16 16"><rect x="5" y="0" width="6" height="10" rx="3" fill="#2076c8"/><path d="M3 7q0 5 5 5t5-5M8 12v3M5 15h6" fill="none" stroke="#2076c8" stroke-width="1.500"/></svg>
    <svg class="i16" viewBox="0 0 16 16"><rect x=".7" y="2.700" width="14.600" height="11" rx="1" fill="none" stroke="#2076c8" stroke-width="1.400"/><path d="M3 6h10M3 8.500h10" stroke="#2076c8" stroke-width="1.500" stroke-dasharray="1.500 1"/><path d="M4 11h8" stroke="#2076c8" stroke-width="1.500"/></svg>
    <svg class="i16" viewBox="0 0 16 16"><circle cx="6" cy="3.500" r="3" fill="#a9b8d2"/><path d="M0 14c0-5 2-6 6-6h3v6z" fill="#a9b8d2"/><path d="M5 9h10.500v6H5zM7 11h2v2H7zM12 10.500v3.500" fill="#fff" stroke="#a9b8d2"/></svg>
    <svg class="i16" viewBox="0 0 16 16"><path d="M1 3l4-2q3 3 6 0l4 2v5h-3v7H4V8H1z" fill="#2076c8"/></svg>
    <svg class="i16" viewBox="0 0 16 16"><path d="M2 14l7-7" stroke="#2076c8" stroke-width="3.500" stroke-linecap="round"/><path d="M13.500 1L10 4.500l1.500 1.500L15 2.500c1 4-2 7-6 5.500-2-3 .5-7.500 4.500-7z" fill="#2076c8"/></svg>
  </div>
  <svg class="mark" viewBox="0 0 256 362" aria-hidden="true"><ellipse cx="128" cy="181" rx="126" ry="179" fill="none" stroke="#f00" stroke-width="3"/></svg>
</div>
</body>
</html>
```

FILE: styles.css
```css
* { box-sizing: border-box; }
html, body { height: 100%; margin: 0; }
body {
  --ui: "Open Sans", "Noto Sans CJK SC", sans-serif;
  --song: "Liberation Serif", "Noto Sans CJK SC", serif;
  font: 12px/16px var(--ui);
  color: #000;
  background: #f0f0f0;
  overflow: hidden;
}
button { font: inherit; color: inherit; border: 0; background: none; padding: 0; margin: 0; white-space: nowrap; }
ul { list-style: none; margin: 0; padding: 0; }
h1, h2 { font: inherit; margin: 0; }
svg { display: block; flex: none; }
.sprite { position: absolute; width: 0; height: 0; }
.i16 { width: 16px; height: 16px; }
.i12 { width: 12px; height: 12px; }

.app { position: relative; display: flex; flex-direction: column; height: 100vh; overflow: hidden; }

.titlebar { display: flex; align-items: center; height: 23px; padding-left: 2px; gap: 5px; background: #fff; flex: none; }
.titlebar h1 { flex: 1; white-space: nowrap; font: 13px/16px Roboto, "Noto Sans CJK SC", sans-serif; }
.winbtns { display: flex; }
.winbtns button { width: 46px; height: 20px; display: grid; place-items: center; }
.winbtns svg { width: 12px; height: 12px; }

.menubar { display: flex; align-items: stretch; height: 31px; flex: none; }
.menus { display: flex; align-items: center; gap: 12px; padding: 0 6px 0 5px; }
.menus .tool { margin-left: -5px; }
.tip { flex: 1; display: flex; align-items: center; padding-left: 28px; color: #2f6500; text-decoration: none; background: linear-gradient(#fafafa, #ededed); }
.account { display: flex; align-items: center; gap: 8px; width: 240px; padding-left: 2px; background: linear-gradient(#fafafa, #ededed); border-left: 2px solid #f6f6f6; }
.account .more { margin-left: auto; }

.tool { display: flex; align-items: center; gap: 4px; }
.arrow { width: 9px; height: 4px; flex: none; background: linear-gradient(#222, #222) center top / 5px 1px no-repeat, linear-gradient(#222, #222) center 1px / 3px 1px no-repeat, linear-gradient(#222, #222) center 2px / 1px 1px no-repeat; }
.off { color: #8a8a8a; }
.more { font: bold 14px/14px "Noto Sans", var(--ui); align-self: flex-start; padding-right: 4px; }
.sep { width: 1px; height: 20px; background: #b4b4b4; margin: 0 -3px; flex: none; }
.toolbar { display: flex; align-items: center; gap: 7px; background: linear-gradient(#fcfcfc, #eeeeee); }
.toolbars { display: flex; gap: 3px; height: 28px; flex: none; }
.toolbar .more { margin-left: auto; }
.files { width: 151px; padding-left: 5px; }
.files .sep { margin: 0; }
.drawing { width: 545px; padding-left: 3px; }
.views { flex: 1; padding-left: 3px; min-width: 0; }
.sigma { font: bold 16px/16px "Liberation Serif", serif; text-align: center; }
.dim { border: 1px solid #777; height: 23px; width: 62px; padding: 0 3px; margin-right: -3px; }
.swatch { width: 14px; height: 11px; border: 1px solid #b5b5b5; background: #e6e6e6; }

.body { flex: 1; display: flex; gap: 5px; min-height: 0; padding-top: 2px; }
.nav { width: 165px; display: flex; flex-direction: column; flex: none; font-family: var(--song); }
.navhead { display: flex; align-items: center; height: 16px; background: #0054e3; color: #fff; gap: 8px; padding-right: 5px; margin-bottom: 2px; flex: none; }
.navhead h2 { flex: 1; font-size: 13px; line-height: 15px; }
.navhead svg { width: 10px; height: 10px; }
.bigbtn { height: 22px; border: 1px solid #a0a0a0; border-width: 0 1px 1px 0; box-shadow: inset 1px 1px #fff; background: #f0f0f0; flex: none; }
.raised { border: 1px solid #808080; border-width: 0 2px 2px 1px; }
.navtools { display: flex; gap: 7px; height: 25px; align-items: center; padding-left: 7px; margin-top: 1px; background: linear-gradient(#fcfcfc, #ededed); flex: none; }
.treebox { flex: 1; min-height: 0; margin: 0 1px 0 2px; border: 2px solid #828790; border-width: 2px 1px 1px 2px; background: #fff; display: grid; grid-template: minmax(0, 1fr) 17px / minmax(0, 1fr) 17px; }
.treeview { overflow: hidden; }
.tree { background: repeating-linear-gradient(#808080 0 1px, transparent 1px 2px) 11px 0 / 1px 100% no-repeat; }
.group { position: relative; display: flex; align-items: center; width: 100%; height: 16px; padding-left: 5px; background: #fff; }
.group .chev { width: 10px; height: 10px; margin-right: 4px; }
.group .i16 { margin: 0 5px 0 3px; }
.leaves { margin-left: 30px; background: repeating-linear-gradient(#808080 0 1px, transparent 1px 2px) 0 0 / 1px calc(100% - 7px) no-repeat; }
.leaves li { display: flex; align-items: center; height: 16px; }
.leaves li::before { content: ""; width: 9px; height: 1px; flex: none; background: repeating-linear-gradient(90deg, #808080 0 1px, transparent 1px 2px); }
.leaves button { display: flex; align-items: center; height: 16px; gap: 5px; padding: 0 4px 0 2px; }
.leaves .current { background: #d9d9d9; }
.vscroll { display: flex; flex-direction: column; align-items: center; padding: 5px 0 4px; background: #f0f0f0; width: 16px; }
.vscroll svg, .hscroll svg { width: 10px; height: 10px; }
.track { flex: 1; display: flex; align-self: stretch; }
.track i { background: #cdcdcd; }
.vscroll .track { margin: 5px 0; flex-direction: column; }
.navtrack i { height: 83%; margin-top: 9px; }
.maintrack i { height: 67%; margin-top: -3px; }
.hscroll { display: flex; align-items: center; width: 142px; padding: 0 5px 0 3px; background: #f0f0f0; }
.hscroll .track { margin: 0 4px; height: 15px; }
.hscroll .track i { width: 96%; }

.work { flex: 1; min-width: 0; display: flex; flex-direction: column; }
.edit { height: 27px; padding-left: 5px; flex: none; white-space: nowrap; }
.edit .tool .arrow { width: 7px; margin-left: -2px; }
.pick { display: flex; align-items: center; width: 66px; height: 20px; background: #fff; padding: 0 4px; margin-left: -3px; }
.pick select { appearance: none; flex: 1; min-width: 0; border: 0; padding: 0; background: none; font: inherit; color: #000; }
.panes { flex: 1; display: flex; gap: 3px; min-height: 0; }
.parts { width: 184px; display: flex; flex-direction: column; border: 1px solid #828790; border-width: 0 2px 2px 1px; background: #fff; margin: 4px 0 0 1px; font-family: var(--song); }
.searchrow { display: flex; align-items: center; height: 27px; border-bottom: 1px solid #828790; gap: 5px; }
.searchrow input { width: 157px; height: 24px; border: 1px solid #6e6e6e; padding: 0 2px 1px; font: inherit; background: #fff; }
.searchrow input::placeholder { color: #777; opacity: 1; }
.partbox { padding-top: 2px; }
.partbox .group { padding-left: 6px; }
.partbox .leaves { margin-left: 31px; }
.partbox .leaves button { gap: 6px; padding: 0 4px; }
.partbox .leaves .selected { background: #316ac5; }

.editor { flex: 1; min-width: 0; display: flex; flex-direction: column; background: #fff; border: 1px solid #dadada; border-width: 0 2px 1px 1px; margin: 1px 2px 0 0; }
.tabs { display: flex; height: 20px; border-bottom: 1px solid #dadada; flex: none; margin-bottom: 4px; }
.tab { width: 62px; height: 20px; background: #fff; border-right: 1px solid #dadada; font-family: var(--song); }
.sheet { position: relative; flex: 1; min-height: 0; display: flex; border: 1px solid #a0a0a0; margin: 0 1px 1px 2px; padding: 1px; }
.canvas { flex: 1; }
table { border-collapse: separate; border-spacing: 0; table-layout: fixed; width: 369px; font: 12px/16px var(--song); }
.c1 { width: 21px; } .c2 { width: 191px; } .c3 { width: 126px; } .c4 { width: 31px; }
th, td { height: 19px; padding: 0 0 0 2px; border: 1px solid #c0c0c0; border-width: 0 1px 1px 0; font-weight: normal; white-space: nowrap; overflow: hidden; line-height: 16px; }
th { padding: 0; text-align: center; background: linear-gradient(#fff, #efefef); }
thead th { height: 23px; }
thead .hot { background: linear-gradient(#f8d9a2, #f0bc5c); color: #5a0050; }
td:last-child { text-align: center; padding: 0; }
td input { appearance: none; width: 13px; height: 13px; border: 1px solid #222; background: #fff; display: block; margin: 0 auto; }
.n { padding: 2px 0 0 20px; }
.key { color: #00f; }
.dimmed { color: #808080; }
.sub { padding-left: 30px; background: linear-gradient(#c0c0c0, #c0c0c0) 8px 0 / 1px 100% no-repeat, linear-gradient(#c0c0c0, #c0c0c0) 8px 9px / 17px 1px no-repeat; }
.last { background-size: 1px 9px, 17px 1px; }
.fold { padding-left: 2px; }
.fold button { width: 13px; height: 13px; border: 1px solid #c0c0c0; color: #000; font: 12px/11px "Liberation Mono", monospace; margin-right: 5px; vertical-align: 1px; }
.active th { background: #fdcf85; color: #5a0050; }
.active .n { background-color: #0078d7; color: #fff; }
.active td:nth-child(3) { background: #d9eaf9; }
.phi { display: inline-block; width: 12px; height: 12px; vertical-align: -2px; margin: 0 1px; }
.round { padding-left: 5px; }

.stirrup { position: absolute; right: 16px; top: 0; width: 269px; height: 283px; margin: 0; border: 1px solid #444; padding: 11px 8px 6px; background: linear-gradient(#b9cbdb, #d7e3f1 30px); }
.stirrup figcaption { color: #999; height: 20px; line-height: 16px; }
.stirrup svg { width: 252px; height: 242px; font-family: var(--song); }

.status { display: flex; gap: 3px; height: 24px; padding-top: 4px; flex: none; background: #f7f7f7; font: 12px/18px var(--song); }
.status span { border: 1px solid #d4d4d4; padding-left: 1px; background: linear-gradient(#fdfdfd, #efefef); white-space: nowrap; }
.s1 { width: 148px; } .s2 { width: 77px; } .s3 { width: 97px; } .s4 { width: 47px; } .s5 { flex: 1; } .s6 { width: 70px; }

.taskbar { display: flex; height: 40px; flex: none; background: #020b0e; color: #fff; }
.start { width: 48px; background: #000; display: grid; place-items: center; }
.start svg { width: 16px; height: 16px; }
.cortana { width: 344px; background: #333; display: flex; align-items: center; gap: 5px; padding: 0 14px 0 9px; }
.cortana svg { width: 22px; height: 22px; }
.cortana .mic { width: 14px; height: 18px; }
.cortana input { flex: 1; min-width: 0; border: 0; background: none; font: 14px/20px var(--ui); padding: 0; }
.cortana input::placeholder { color: #999; opacity: 1; }
.tasks { display: flex; }
.tasks button { width: 50px; display: grid; place-items: center; border: solid transparent; border-width: 2px 0; }
.tasks svg { width: 24px; height: 24px; }
.tasks .open { border-bottom-color: #76b9ed; background-clip: padding-box; margin: 0 1px; width: 48px; }
.tasks .focus { background: #343f42; }
.tray { margin-left: auto; display: flex; align-items: center; gap: 9px; }
.t12 { width: 14px; height: 12px; } .t16 { width: 16px; height: 16px; } .t23 { width: 23px; height: 14px; }
.ime { font-size: 14px; }
time { width: 78px; margin-left: 2px; text-align: center; line-height: 19px; padding: 1px 0 0 12px; }
.notify { width: 53px; margin-right: 4px; border-right: 1px solid #555; display: grid; place-items: center; }
.notify svg { width: 26px; height: 26px; font-family: var(--ui); }

.ball { position: absolute; left: 860px; top: -28px; width: 50px; height: 50px; font-family: var(--ui); }
.imebar { position: absolute; left: 911px; top: 3px; width: 207px; height: 24px; display: flex; align-items: center; gap: 6px; background: #fff; border: 1px solid #b1c3da; color: #2076c8; }
.imebar .logo { width: 28px; height: 28px; margin-right: -1px; }
.imebar b { font-size: 16px; }
.mark { position: absolute; left: 485px; top: 77px; width: 256px; height: 362px; pointer-events: none; }
```
